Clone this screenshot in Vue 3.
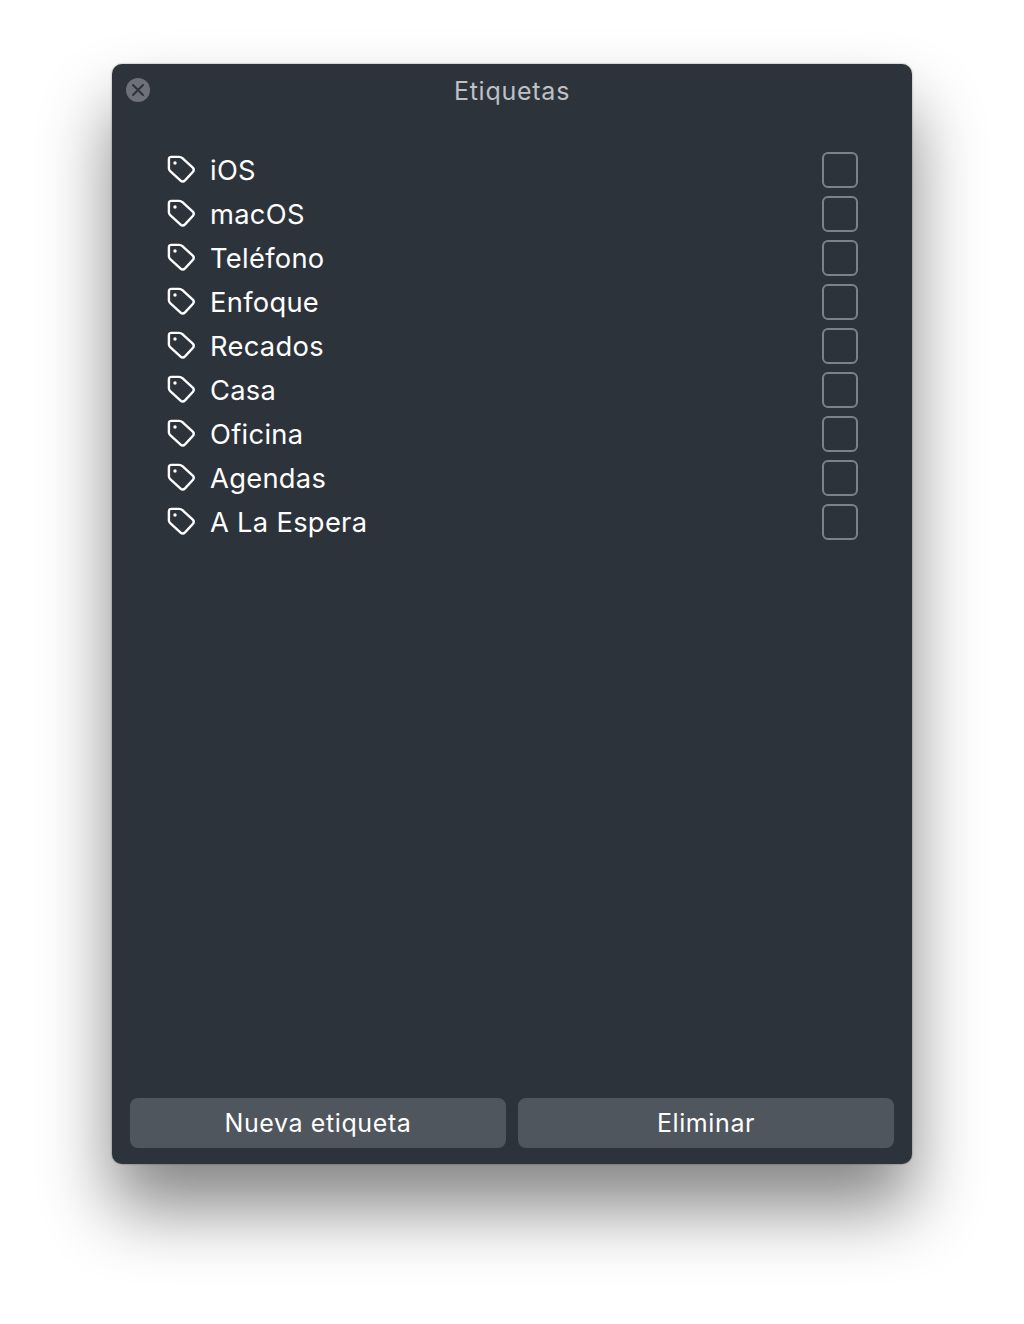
<template>
  <div class="page">
    <div class="window">
      <header class="titlebar">
        <button class="close">
          <svg width="14" height="14" viewBox="0 0 14 14">
            <path d="M2 2 L12 12 M12 2 L2 12" stroke="#2d333b" stroke-width="2" stroke-linecap="round" fill="none" />
          </svg>
        </button>
        <span class="title">Etiquetas</span>
      </header>

      <ul class="tag-list">
        <li v-for="tag in tags" :key="tag" class="tag-row">
          <svg class="tag-icon" width="30" height="30" viewBox="0 0 30 30">
            <path
              d="M5.4 1.9 H13 Q15 1.9 16.4 3.2 L26.8 12.6 Q28.8 14.8 26.8 17 L19 25.4 Q16.8 27.6 14.6 25.6 L4.2 16.2 Q2.9 15 2.9 13.2 V4.4 Q2.9 1.9 5.4 1.9 Z"
              fill="none" stroke="#fff" stroke-width="2.4" stroke-linejoin="round"
            />
            <circle cx="9" cy="8" r="1.7" fill="#fff" />
          </svg>
          <span class="tag-name">{{ tag }}</span>
          <span class="checkbox"></span>
        </li>
      </ul>

      <footer class="actions">
        <button class="action">Nueva etiqueta</button>
        <button class="action">Eliminar</button>
      </footer>
    </div>
  </div>
</template>

<script setup>
const tags = ['iOS', 'macOS', 'Teléfono', 'Enfoque', 'Recados', 'Casa', 'Oficina', 'Agendas', 'A La Espera']
</script>

<style scoped>
.page {
  width: 1024px;
  height: 1324px;
  box-sizing: border-box;
  padding: 64px 112px 160px;
  background: #fff;
  font-family: Inter, "Noto Sans", sans-serif;
  overflow: hidden;
}

.window {
  height: 1100px;
  box-sizing: border-box;
  display: flex;
  flex-direction: column;
  background: #2d333b;
  border-radius: 10px;
  box-shadow: 0 0 2px rgba(0, 0, 0, 0.45), 0 44px 70px rgba(0, 0, 0, 0.48);
}

.titlebar {
  height: 54px;
  display: flex;
  align-items: center;
  justify-content: center;
  position: relative;
}

.close {
  position: absolute;
  left: 14px;
  top: 14px;
  width: 24px;
  height: 24px;
  padding: 0;
  border: none;
  border-radius: 50%;
  background: #6d7177;
  display: flex;
  align-items: center;
  justify-content: center;
}

.title {
  font-size: 25px;
  letter-spacing: 0.75px;
  color: #bdc0c5;
}

.tag-list {
  flex: 1;
  list-style: none;
  margin: 0;
  padding: 30px 54px 0 54px;
}

.tag-row {
  height: 44px;
  display: flex;
  align-items: center;
}

.tag-icon {
  flex: none;
}

.tag-name {
  flex: 1;
  margin-left: 14px;
  font-size: 27.3px;
  letter-spacing: 0.3px;
  color: #fff;
}

.checkbox {
  width: 36px;
  height: 36px;
  box-sizing: border-box;
  border: 2px solid #7e8288;
  border-radius: 6px;
}

.actions {
  display: flex;
  gap: 12px;
  padding: 0 18px 16px;
}

.action {
  flex: 1;
  height: 50px;
  border: none;
  border-radius: 8px;
  background: #4f565e;
  color: #fff;
  font-family: inherit;
  font-size: 25px;
  letter-spacing: 0.6px;
}
</style>
